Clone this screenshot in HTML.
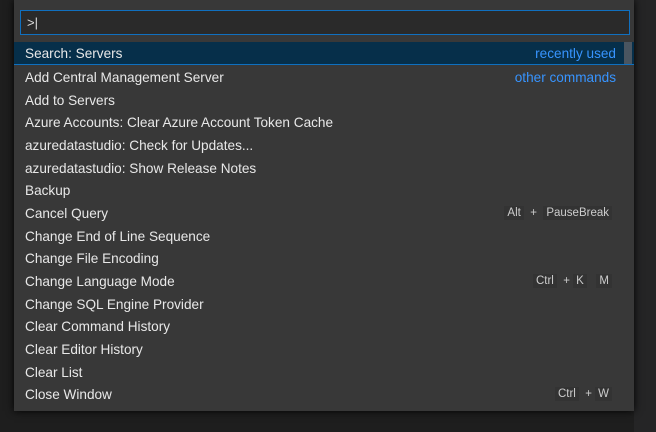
<!DOCTYPE html><html><head><style>
body{margin:0;width:656px;height:432px;background:#1e1e1e;overflow:hidden;font-family:"Liberation Sans","DejaVu Sans",sans-serif;position:relative}
.right{position:absolute;left:634px;top:0;width:22px;height:432px;background:#252526}
.w{position:absolute;left:14px;top:0;width:620px;height:411px;background:#383838;box-shadow:0 0 8px #000}
.in{position:absolute;left:6px;top:10px;width:602px;height:23px;background:#2a2a2a;border:1.5px solid #1070c0;color:#ddd;font-size:13px;line-height:24px;padding-left:6px;box-sizing:content-box}
.r{position:absolute;left:0;width:620px;height:22px;line-height:23px;font-size:13.6px;color:#e8e8e8;padding-left:11px;box-sizing:border-box}
.sel{background:#062f4a;border-bottom:1.5px solid #0e70c0;height:23px}
.lab{position:absolute;right:18px;top:0;color:#3794ff}
.k{position:absolute;right:22px;top:0;font-size:11.5px;color:#ccc}
.k span{background:#333;padding:1px 3px}
.sb{position:absolute;left:610px;top:42px;width:8px;height:22px;background:#4a5560}
</style></head><body>
<div class="right"></div>
<div class="w">
<div class="in">&gt;|</div>
<div class="r sel" style="top:42px">Search: Servers<span class="lab" style="right:18px">recently used</span></div>
<div class="sb"></div>
<div class="r" style="top:66px">Add Central Management Server<span class="lab">other commands</span></div>
<div class="r" style="top:89px">Add to Servers</div>
<div class="r" style="top:111px">Azure Accounts: Clear Azure Account Token Cache</div>
<div class="r" style="top:134px">azuredatastudio: Check for Updates...</div>
<div class="r" style="top:157px">azuredatastudio: Show Release Notes</div>
<div class="r" style="top:179px">Backup</div>
<div class="r" style="top:202px">Cancel Query<span class="k"><span>Alt</span> &nbsp;+&nbsp; <span>PauseBreak</span></span></div>
<div class="r" style="top:225px">Change End of Line Sequence</div>
<div class="r" style="top:247px">Change File Encoding</div>
<div class="r" style="top:270px">Change Language Mode<span class="k"><span>Ctrl</span> &nbsp;+&nbsp;<span>K</span> &nbsp;&nbsp;<span>M</span></span></div>
<div class="r" style="top:293px">Change SQL Engine Provider</div>
<div class="r" style="top:315px">Clear Command History</div>
<div class="r" style="top:338px">Clear Editor History</div>
<div class="r" style="top:361px">Clear List</div>
<div class="r" style="top:383px">Close Window<span class="k"><span>Ctrl</span> &nbsp;+&nbsp;<span>W</span></span></div>
</div>
</body></html>
